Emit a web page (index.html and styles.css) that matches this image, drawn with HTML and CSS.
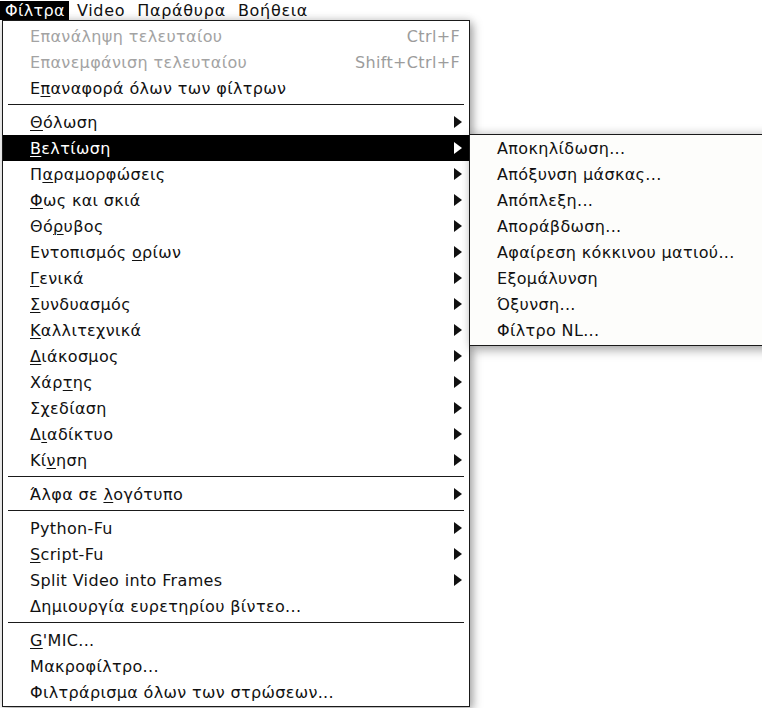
FILE: index.html
```html
<!DOCTYPE html>
<html lang="el">
<head>
<meta charset="utf-8">
<title>GIMP Φίλτρα</title>
<link rel="stylesheet" href="styles.css">
</head>
<body>
<div class="menubar">
  <span class="mb-item active">Φίλτρα</span>
  <span class="mb-item">Video</span>
  <span class="mb-item">Παράθυρα</span>
  <span class="mb-item">Βοήθεια</span>
</div>

<div class="menu main">
  <div class="row disabled"><span class="lbl">Επανάληψη τελευταίου</span><span class="acc">Ctrl+F</span></div>
  <div class="row disabled"><span class="lbl">Επανεμφάνιση τελευταίου</span><span class="acc">Shift+Ctrl+F</span></div>
  <div class="row"><span class="lbl">Ε<u>π</u>αναφορά όλων των φίλτρων</span></div>
  <div class="sep"></div>
  <div class="row"><span class="lbl"><u>Θ</u>όλωση</span><span class="arrow"></span></div>
  <div class="row hl"><span class="lbl"><u>Β</u>ελτίωση</span><span class="arrow"></span></div>
  <div class="row"><span class="lbl">Π<u>α</u>ραμορφώσεις</span><span class="arrow"></span></div>
  <div class="row"><span class="lbl"><u>Φ</u>ως και σκιά</span><span class="arrow"></span></div>
  <div class="row"><span class="lbl">Θό<u>ρ</u>υβος</span><span class="arrow"></span></div>
  <div class="row"><span class="lbl">Εντοπισμός <u>ο</u>ρίων</span><span class="arrow"></span></div>
  <div class="row"><span class="lbl"><u>Γ</u>ενικά</span><span class="arrow"></span></div>
  <div class="row"><span class="lbl"><u>Σ</u>υνδυασμός</span><span class="arrow"></span></div>
  <div class="row"><span class="lbl"><u>Κ</u>αλλιτεχνικά</span><span class="arrow"></span></div>
  <div class="row"><span class="lbl"><u>Δ</u>ιάκοσμος</span><span class="arrow"></span></div>
  <div class="row"><span class="lbl">Χάρ<u>τ</u>ης</span><span class="arrow"></span></div>
  <div class="row"><span class="lbl">Σ<u>χ</u>εδίαση</span><span class="arrow"></span></div>
  <div class="row"><span class="lbl">Δ<u>ι</u>αδίκτυο</span><span class="arrow"></span></div>
  <div class="row"><span class="lbl">Κί<u>ν</u>ηση</span><span class="arrow"></span></div>
  <div class="sep"></div>
  <div class="row"><span class="lbl">Άλφα σε <u>λ</u>ογότυπο</span><span class="arrow"></span></div>
  <div class="sep"></div>
  <div class="row"><span class="lbl">Python-Fu</span><span class="arrow"></span></div>
  <div class="row"><span class="lbl"><u>S</u>cript-Fu</span><span class="arrow"></span></div>
  <div class="row"><span class="lbl">Split Video into Frames</span><span class="arrow"></span></div>
  <div class="row"><span class="lbl">Δημιουργία ευρετηρίου βίντεο...</span></div>
  <div class="sep"></div>
  <div class="row"><span class="lbl"><u>G</u>'MIC...</span></div>
  <div class="row"><span class="lbl">Μακροφίλτρο...</span></div>
  <div class="row"><span class="lbl">Φιλτράρισμα όλων των στρώσεων...</span></div>
</div>

<div class="menu sub">
  <div class="row"><span class="lbl">Αποκηλίδωση...</span></div>
  <div class="row"><span class="lbl">Απόξυνση μάσκας...</span></div>
  <div class="row"><span class="lbl">Απόπλεξη...</span></div>
  <div class="row"><span class="lbl">Απoράβδωση...</span></div>
  <div class="row"><span class="lbl">Αφαίρεση κόκκινου ματιού...</span></div>
  <div class="row"><span class="lbl">Εξομάλυνση</span></div>
  <div class="row"><span class="lbl">Όξυνση...</span></div>
  <div class="row"><span class="lbl">Φίλτρο NL...</span></div>
</div>
</body>
</html>
```

FILE: styles.css
```css
html, body {
  margin: 0;
  padding: 0;
  background: #ffffff;
  width: 762px;
  height: 708px;
  overflow: hidden;
}

body {
  font-family: "DejaVu Sans", "Noto Sans", sans-serif;
  font-size: 16px;
  letter-spacing: 0.35px;
  color: #111111;
  position: relative;
}

.menubar {
  display: flex;
  height: 20px;
  align-items: center;
}

.mb-item {
  padding: 0 4px 0 5px;
  line-height: 19px;
  height: 19px;
  margin-right: 3px;
  letter-spacing: 0.7px;
}

.mb-item.active {
  background: #000000;
  color: #ffffff;
  letter-spacing: 0.35px;
}

.menu {
  position: absolute;
  background: #ffffff;
  border: 1px solid #1a1a1a;
  box-sizing: border-box;
}

.main {
  left: 2px;
  top: 20px;
  width: 468px;
  padding: 2px 0 0 0;
  height: 687px;
  box-shadow: 3px 3px 9px rgba(0, 0, 0, 0.35), 0 -2px 8px rgba(0, 0, 0, 0.08);
  z-index: 1;
}

.sub {
  left: 469px;
  top: 134px;
  width: 310px;
  padding: 0;
  height: 212px;
  background: #fdfdfb;
  box-shadow: 3px 4px 10px rgba(0, 0, 0, 0.35), 0 -3px 8px rgba(0, 0, 0, 0.08);
  z-index: 2;
}

.row {
  display: flex;
  align-items: center;
  height: 26px;
  padding: 0 7px 0 27px;
  white-space: nowrap;
}

.lbl {
  flex: 1;
  padding-top: 1px;
}

.acc {
  color: #9c9c9c;
  padding-right: 2px;
  padding-top: 1px;
}

.disabled .lbl {
  color: #a3a3a3;
}

.hl {
  background: #000000;
  color: #ffffff;
}

.arrow {
  width: 0;
  height: 0;
  border-left: 8px solid #111111;
  border-top: 6px solid transparent;
  border-bottom: 6px solid transparent;
}

.hl .arrow {
  border-left-color: #ffffff;
}

.sep {
  height: 8px;
  box-sizing: border-box;
  padding-top: 3px;
  margin: 0 5px;
}

.sep::before {
  content: "";
  display: block;
  height: 1px;
  background: #1a1a1a;
}

u {
  text-decoration: underline;
  text-decoration-thickness: 1px;
  text-underline-offset: 2px;
}
```
